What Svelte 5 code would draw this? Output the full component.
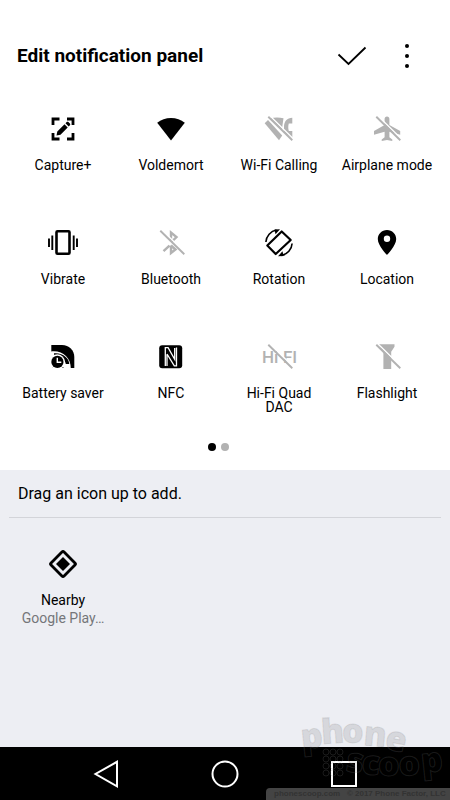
<script lang="ts">
  interface Tile {
    id: string;
    label: string;
    on: boolean;
  }

  const tiles: Tile[] = [
    { id: 'capture', label: 'Capture+', on: true },
    { id: 'wifi', label: 'Voldemort', on: true },
    { id: 'wificall', label: 'Wi-Fi Calling', on: false },
    { id: 'airplane', label: 'Airplane mode', on: false },
    { id: 'vibrate', label: 'Vibrate', on: true },
    { id: 'bluetooth', label: 'Bluetooth', on: false },
    { id: 'rotation', label: 'Rotation', on: true },
    { id: 'location', label: 'Location', on: true },
    { id: 'battery', label: 'Battery saver', on: true },
    { id: 'nfc', label: 'NFC', on: true },
    { id: 'hifi', label: 'Hi-Fi Quad\nDAC', on: false },
    { id: 'flashlight', label: 'Flashlight', on: false }
  ];
</script>

{#snippet slash()}
  <path d="M8.800 4.700L32.800 28.200" stroke="#fff" stroke-width="1.400" />
  <path d="M7.300 5.800L31.300 29.300" stroke="currentColor" stroke-width="1.900" />
{/snippet}

{#snippet icon(id: string)}
  <svg class="icon" width="36" height="36" viewBox="0 0 36 36" fill="none" aria-hidden="true">
    {#if id === 'capture'}
      <path d="M14.500 8H8v6M22 8h6v6M8 22v6h6.500M28 22v6h-6" stroke="currentColor" stroke-width="2.800" />
      <path d="M11.500 24.500l.8-4 7.200-7.200 3.200 3.200-7.200 7.200zM20.500 12.300l1.200-1.200c.5-.5 1.200-.5 1.700 0l1.500 1.500c.5.5.5 1.200 0 1.700l-1.200 1.200z" fill="currentColor" />
    {:else if id === 'wifi'}
      <path d="M18 29.500L4.200 11.700C8 8.600 12.800 7 18 7s10 1.600 13.800 4.700z" fill="currentColor" />
    {:else if id === 'wificall'}
      <path d="M9.500 7.300Q16 5.900 22.500 7.300L20.800 18.800z" fill="currentColor" />
      <path d="M3.700 12.300l3.300-3.300L21.200 24.500 18 29.200z" fill="currentColor" />
      <path d="M31.300 6.800c-5.200 0-8.300 3.700-8.300 9.200v5.500l8.300 5.500v-7h-3.500c-.7-2.500-.7-5.200 0-7.500h3.500z" fill="currentColor" />
      {@render slash()}
    {:else if id === 'airplane'}
      <path d="M18 5.500c1.500 0 2.400 1 2.400 2.500v6L31.200 20v3.700l-10.800-3v5.500l2.900 2.300V30L18 29l-5.300 1v-1.500l2.900-2.300v-5.500L5 23.700V20l10.600-6V8c0-1.500.9-2.500 2.400-2.500z" fill="currentColor" />
      {@render slash()}
    {:else if id === 'vibrate'}
      <rect x="11.500" y="6.300" width="13" height="22.400" rx="1" stroke="currentColor" stroke-width="2.600" />
      <path d="M7.300 10.500v14.500M28.700 10.500v14.500M4 13.500v8.500M32 13.500v8.500" stroke="currentColor" stroke-width="1.900" />
    {:else if id === 'bluetooth'}
      <path d="M18 15V7.500l5.500 4.500-4.500 4.500M10.500 26.200l6-5.500M18 20.500v7.500l4.500-3.500-4.500-4" stroke="currentColor" stroke-width="2.400" />
      {@render slash()}
    {:else if id === 'rotation'}
      <path d="M20.700 6.500L29.700 15 14.700 29 6.300 20.500z" stroke="currentColor" stroke-width="2.200" stroke-linejoin="round" />
      <path d="M4.900 17A13 13 0 0 1 15.500 5M31.100 18.500A13 13 0 0 1 20.500 30.500" stroke="currentColor" stroke-width="1.600" />
      <path d="M13.500 4.500l5.500-.3-4.500 5zM22.500 31l-5.500.3 4.500-5z" fill="currentColor" />
    {:else if id === 'location'}
      <path fill-rule="evenodd" d="M18 5c-5.200 0-9.200 4-9.200 9C8.800 20.800 18 30 18 30s9.200-9.200 9.200-16c0-5-4-9-9.200-9zm0 12a3.200 3.200 0 1 1 0-6.400 3.200 3.200 0 0 1 0 6.400z" fill="currentColor" />
    {:else if id === 'battery'}
      <path d="M6.300 6H17c7 0 12.300 5 12.300 12v11H6.300z" fill="currentColor" />
      <path d="M6 12.500C17 11 25.800 18 25.800 29.500h-6L6 20z" fill="#fff" />
      <path d="M9 14.300c9-.8 15 5 15.300 10.700h-3.500c-.8-4.500-5-8.300-11.800-8.500z" fill="currentColor" />
      <circle cx="12.300" cy="22.800" r="7.600" fill="#fff" />
      <path d="M5 17h2v13H5zM5 29h20v3H5z" fill="#fff" />
      <circle cx="12.400" cy="22.900" r="6.100" fill="currentColor" />
      <path d="M12.300 18.800v4.500h4" stroke="#fff" stroke-width="1.400" />
    {:else if id === 'nfc'}
      <rect x="6.200" y="6.200" width="23" height="23" rx="3" fill="currentColor" />
      <path d="M12.300 27V8.700h2.800l6.600 11.500V9M14 15.500V27M14 15l7.300 11.800h2.200V8.500" stroke="#fff" stroke-width="1.300" />
    {:else if id === 'hifi'}
      <text class="hifi" x="1" y="24" fill="currentColor">Hi</text>
      <text class="hifi" x="22" y="24" fill="currentColor">FI</text>
      {@render slash()}
    {:else if id === 'flashlight'}
      <path d="M9 5.300h16.500v2.500l-3.300 5V30h-7.800V12.800z" fill="currentColor" />
      {@render slash()}
    {:else if id === 'nearby'}
      <rect x="8.800" y="8.800" width="18.400" height="18.400" rx="1.500" transform="rotate(45 18 18)" stroke="currentColor" stroke-width="2.800" />
      <path d="M18 11l7 7-7 7-7-7z" fill="currentColor" />
    {/if}
  </svg>
{/snippet}

<div class="screen">
  <main class="active-panel">
    <header class="header">
      <h1 class="title">Edit notification panel</h1>
      <div class="actions">
        <button class="action" aria-label="Done">
          <svg width="32" height="32" viewBox="0 0 32 32" fill="none" aria-hidden="true">
            <path d="M2.500 14.500L12.500 24 29.500 7.500" stroke="#000" stroke-width="1.800" />
          </svg>
        </button>
        <button class="action" aria-label="More options">
          <svg width="32" height="32" viewBox="0 0 32 32" aria-hidden="true">
            <circle cx="16" cy="6" r="2" />
            <circle cx="16" cy="16" r="2" />
            <circle cx="16" cy="26" r="2" />
          </svg>
        </button>
      </div>
    </header>

    <div class="tiles">
      {#each tiles as tile (tile.id)}
        <button class="tile" class:off={!tile.on}>
          {@render icon(tile.id)}
          <span class="label">{tile.label}</span>
        </button>
      {/each}
    </div>

    <div class="pager" aria-hidden="true">
      <span class="dot current"></span>
      <span class="dot"></span>
    </div>
  </main>

  <section class="tray">
    <h2 class="hint">Drag an icon up to add.</h2>
    <div class="tiles tray-tiles">
      <button class="tile">
        {@render icon('nearby')}
        <span class="label">Nearby</span>
        <span class="sub">Google Play…</span>
      </button>
    </div>
  </section>

  <nav class="navbar">
    <button class="nav-btn" aria-label="Back">
      <svg width="32" height="32" viewBox="0 0 32 32" fill="none" aria-hidden="true">
        <path d="M27 3.800v24.500L5.500 16z" stroke="#fff" stroke-width="2" />
      </svg>
    </button>
    <button class="nav-btn" aria-label="Home">
      <svg width="32" height="32" viewBox="0 0 32 32" fill="none" aria-hidden="true">
        <circle cx="16" cy="16" r="12.500" stroke="#fff" stroke-width="2" />
      </svg>
    </button>
    <button class="nav-btn" aria-label="Recent apps">
      <svg width="32" height="32" viewBox="0 0 32 32" fill="none" aria-hidden="true">
        <rect x="4" y="4" width="24" height="24" stroke="#fff" stroke-width="2" />
      </svg>
    </button>
  </nav>

  <!-- Watermark over the bottom right corner -->
  <div class="watermark">
    <svg class="logo" width="160" height="80" viewBox="-10 -8 160 80" aria-hidden="true">
      <text class="mark" x="2 22 42 63 84" y="33 28 27 29 33" rotate="-6 -4 0 5 10">phone</text>
      <text class="mark" x="45 61 78 99 122" y="55 58 60 60 57" rotate="8 4 0 -3 -6">scoop</text>
      {#each [0, 1, 2, 3] as row}
        {#each [0, 1, 2] as col}
          <circle class="cell" cx={26 + col * 7} cy={36 + row * 7} r="3" />
        {/each}
      {/each}
    </svg>
    <small class="credit">phonescoop.com &nbsp; © 2017 Phone Factor, LLC</small>
  </div>
</div>

<style>
  :global(body) {
    margin: 0;
    background: #fff;
  }

  .screen {
    position: relative;
    display: flex;
    flex-direction: column;
    min-height: 100vh;
    overflow: hidden;
    font-family: Roboto, 'Liberation Sans', sans-serif;
    color: #000;
  }

  button {
    margin: 0;
    padding: 0;
    border: 0;
    background: none;
    font: inherit;
    color: inherit;
  }

  svg {
    display: block;
  }

  /* ---- Header ---- */
  .header {
    display: flex;
    align-items: center;
    justify-content: space-between;
    padding: 40px 27px 0 17px;
  }

  .title {
    margin: 0;
    font-size: 19px;
    line-height: 32px;
    font-weight: 700;
  }

  .actions {
    display: flex;
    gap: 23px;
  }

  /* ---- Tiles ---- */
  .tiles {
    display: grid;
    grid-template-columns: repeat(4, 1fr);
    grid-auto-rows: minmax(75px, auto);
    row-gap: 39px;
    padding: 39px 9px 0;
  }

  .tile {
    display: flex;
    flex-direction: column;
    align-items: center;
  }

  .tile.off .icon {
    color: #b2b2b2;
  }

  .label {
    margin-top: 11px;
    font-size: 14px;
    line-height: 14px;
    white-space: pre-line;
  }

  .hifi {
    font-size: 17px;
    font-weight: 500;
  }

  /* ---- Pager ---- */
  .pager {
    display: flex;
    justify-content: center;
    gap: 5px;
    padding: 29px 13px 19px 0;
  }

  .dot {
    width: 8px;
    height: 8px;
    border-radius: 50%;
    background: #b2b2b2;
  }

  .dot.current {
    background: #000;
  }

  /* ---- Tray ---- */
  .tray {
    flex: 1;
    background: #edeef3;
  }

  .hint {
    margin: 0 9px;
    padding: 1px 9px 0;
    border-bottom: 1px solid #d3d4d9;
    font-size: 16px;
    line-height: 46px;
    font-weight: 400;
  }

  .tray-tiles {
    padding-top: 28px;
  }

  .sub {
    margin-top: 4px;
    font-size: 14px;
    line-height: 14px;
    color: #75767a;
  }

  /* ---- Navigation bar ---- */
  .navbar {
    display: grid;
    grid-template-columns: repeat(3, 1fr);
    justify-items: center;
    align-items: center;
    height: 53px;
    padding: 0 46px;
    background: #000;
  }

  /* ---- Watermark ---- */
  .watermark {
    position: absolute;
    right: 0;
    bottom: 0;
    display: flex;
    flex-direction: column;
    align-items: flex-end;
    pointer-events: none;
  }

  .mark {
    font-family: 'Open Sans', sans-serif;
    font-size: 34px;
    font-weight: 800;
    fill: rgba(0, 0, 0, 0.1);
    stroke: rgba(128, 128, 128, 0.2);
    stroke-width: 1;
  }

  .cell {
    fill: none;
    stroke: rgba(128, 128, 128, 0.2);
  }

  .credit {
    box-sizing: border-box;
    width: 184px;
    padding: 0 4px 0 8px;
    border-radius: 4px 0 0 0;
    background: #444;
    color: #333;
    font-family: 'Liberation Sans', sans-serif;
    font-size: 8px;
    line-height: 12px;
    font-weight: 700;
    white-space: nowrap;
  }
</style>
